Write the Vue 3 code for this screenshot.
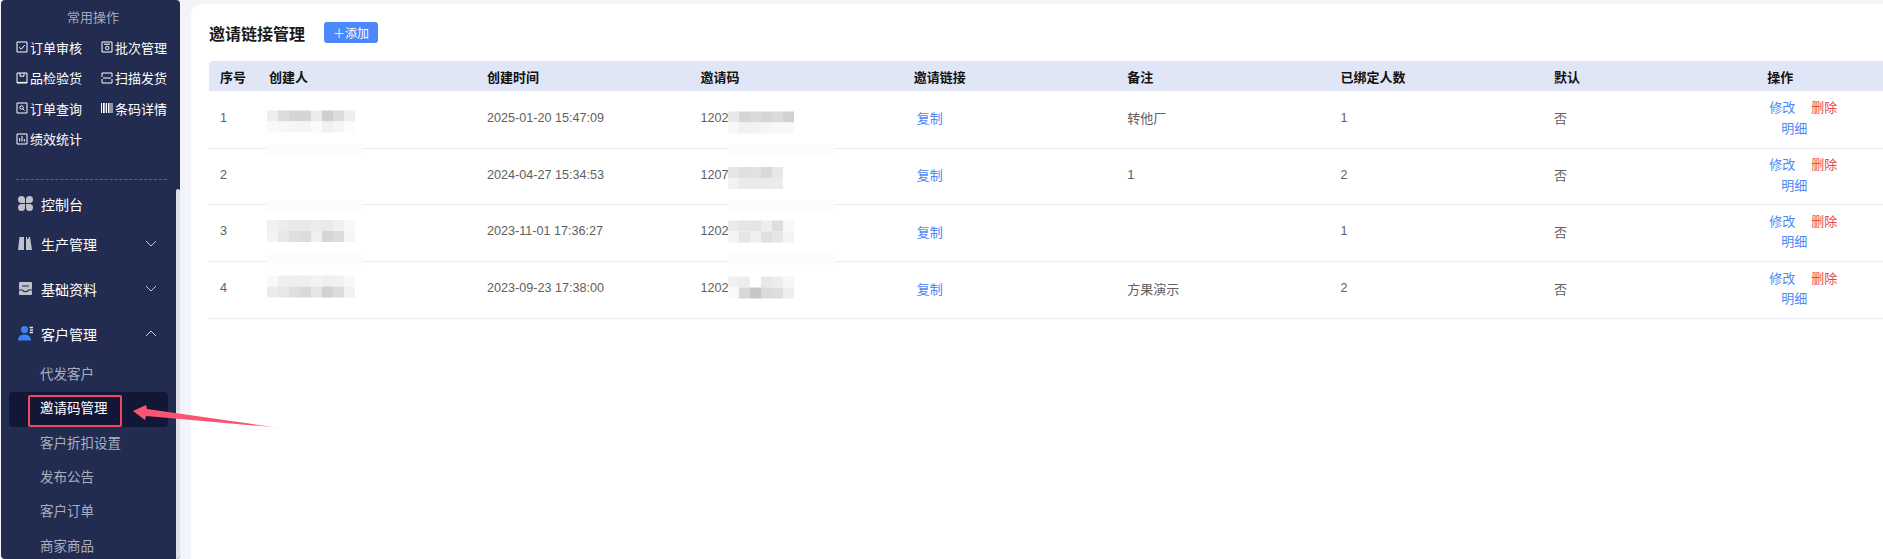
<script setup>
const quickOps = [
  { label: '订单审核', d: 'M1 1h10v10H1z M3.3 6.2l2 2 3.4-4' },
  { label: '批次管理', d: 'M1 1h10v10H1z M3 3.2h6 M8 7a1.7 1.7 0 1 1-3.4 0 1.7 1.7 0 0 1 3.4 0z' },
  { label: '品检验货', d: 'M1 1h10v10H1z M4 1v3.2h4V1 M1 10.4h10' },
  { label: '扫描发货', d: 'M1 5V1h10v4 M2 6h8 M1 7v4h10V7' },
  { label: '订单查询', d: 'M1 1h10v10H1z M7.2 5.5a1.7 1.7 0 1 1-3.4 0 1.7 1.7 0 0 1 3.4 0z M6.8 6.8l1.7 1.7' },
  { label: '条码详情', d: 'M.5 1v10 M2.5 1v10 M3.8 1v10 M5.5 1v10 M7.5 1v10 M9 1v10 M11 1v10' },
  { label: '绩效统计', d: 'M1 1h10v10H1z M3.7 5v3.5 M6 3v5.5 M8.3 6v2.5' }
]

const subMenu = ['代发客户', '邀请码管理', '客户折扣设置', '发布公告', '客户订单', '商家商品']

const headers = ['序号', '创建人', '创建时间', '邀请码', '邀请链接', '备注', '已绑定人数', '默认', '操作']

const rows = [
  {
    no: 1, time: '2025-01-20 15:47:09', prefix: '1202', note: '转他厂', bound: 1, bandTop: 54,
    creator: { y: 3.5, top: ['#eeeeee', '#dedcda', '#d4d4d4', '#d5d5d6', '#ebebeb', '#cfcfd1', '#dcdcdc', '#eeeeef'], bottom: ['#f9f9f9', '#f7f7f7', '#f6f6f6', '#f5f5f5', '#fafafa', '#f1f1f1', '#f5f5f5', '#fbfcfd'] },
    code: { y: 4.5, top: ['#e8e8e8', '#d5d5d7', '#dadada', '#d4d5d7', '#dcdbda', '#d0d1d4'], bottom: ['#f7f7f7', '#f1f1f1', '#f2f2f2', '#f5f6f5', '#f7f8f7', '#f8f8f8'] }
  },
  {
    no: 2, time: '2024-04-27 15:34:53', prefix: '1207', note: '1', bound: 2, bandTop: 51,
    creator: null,
    code: { y: 3, top: ['#e6e6e6', '#e0e0e0', '#e6e1dd', '#d8d9da', '#e8e8e8'], bottom: ['#f2f2f2', '#ebebeb', '#ebebeb', '#ebebeb', '#ececec'] }
  },
  {
    no: 3, time: '2023-11-01 17:36:27', prefix: '1202', note: '', bound: 1, bandTop: 49,
    creator: { y: 0, top: ['#f1f1f1', '#eeecea', '#e9e9e9', '#e8e8e8', '#ebebeb', '#eaeaea', '#f0f0f0', '#f8f8f8'], bottom: ['#f3f3f3', '#e7e7e7', '#dfdfdf', '#dcdcdd', '#f1efee', '#d6d6d6', '#dcdcdc', '#f4f5f7'] },
    code: { y: 0.5, top: ['#eaeaea', '#e6e6e6', '#e4e4e4', '#eeeeee', '#dddddd', '#f8f8f8'], bottom: ['#f3f3f3', '#e6e6e6', '#f0efed', '#dedfe1', '#e6e6e6', '#f4f4f4'] }
  },
  {
    no: 4, time: '2023-09-23 17:38:00', prefix: '1202', note: '方果演示', bound: 2, bandTop: null,
    creator: { y: -1.5, top: ['#f8f9f8', '#efefef', '#eeeeee', '#eeeeee', '#f3f3f3', '#efefef', '#f1f1f1', '#f7f8f9'], bottom: ['#ebebeb', '#e8e6e6', '#dfdfdf', '#d9d9da', '#e6e5e3', '#d2d2d3', '#dcdcdc', '#f1f1f3'] },
    code: { y: -0.5, top: ['#f0f0f0', '#ededed', '#ffffff', '#e8e8e8', '#ececec', '#f7f7f7'], bottom: ['#fafafa', '#d8d8d8', '#c5c6c8', '#ddd9d5', '#dcdde0', '#eeeef0'] }
  }
]
</script>

<template>
  <div class="page">
    <aside class="sidebar">
      <section class="quick">
        <div class="quick-title">常用操作</div>
        <div class="quick-grid">
          <div v-for="op in quickOps" :key="op.label" class="quick-item">
            <svg class="quick-icon" width="12" height="12" viewBox="0 0 12 12"><path :d="op.d" /></svg>
            <span>{{ op.label }}</span>
          </div>
        </div>
      </section>
      <div class="divider"></div>

      <nav class="menu">
        <div class="menu-item first">
          <svg class="menu-icon" width="15" height="15" viewBox="0 0 15 15"><path d="M3.5 0A3.5 3.5 0 0 1 7 3.5V7H3.5a3.5 3.5 0 0 1 0-7z M11.5 0A3.5 3.5 0 0 0 8 3.5V7h3.5a3.5 3.5 0 0 0 0-7z M3.5 15A3.5 3.5 0 0 0 7 11.5V8H3.5a3.5 3.5 0 0 0 0 7z M11.5 15A3.5 3.5 0 0 1 8 11.5V8h3.5a3.5 3.5 0 0 1 0 7z" /></svg>
          <span>控制台</span>
        </div>
        <div class="menu-item">
          <svg class="menu-icon" width="15" height="15" viewBox="0 0 15 15"><path d="M1.5 1H6V14H0z M8 1h1v2h1.5V1H12l2 13H8z" /></svg>
          <span>生产管理</span>
          <svg class="chev" width="12" height="7" viewBox="0 0 12 7"><path d="M1 1l5 5 5-5" /></svg>
        </div>
        <div class="menu-item">
          <svg class="menu-icon" width="15" height="15" viewBox="0 0 15 15">
            <rect x="1" y="1" width="13" height="13" rx="1" />
            <path class="tray" d="M4 5h7 M1 9h3.5c.6 2.2 5.4 2.2 6 0H14" />
          </svg>
          <span>基础资料</span>
          <svg class="chev" width="12" height="7" viewBox="0 0 12 7"><path d="M1 1l5 5 5-5" /></svg>
        </div>
        <div class="menu-item">
          <svg class="menu-icon" width="15" height="15" viewBox="0 0 15 15">
            <path class="blue" d="M6.5 0a3.6 3.6 0 1 1 0 7.2 3.6 3.6 0 0 1 0-7.2z M0 14.5c0-4 2.8-6 6.5-6s6.5 2 6.5 6z" />
            <path class="lines" d="M11.5 1.5H15 M12 4H15 M11.5 6.5H15" />
          </svg>
          <span>客户管理</span>
          <svg class="chev" width="12" height="7" viewBox="0 0 12 7"><path d="M1 6l5-5 5 5" /></svg>
        </div>
        <div
          v-for="(sub, i) in subMenu"
          :key="sub"
          class="sub-item"
          :class="{ active: i === 1 }"
        >{{ sub }}</div>
      </nav>
      <div class="scrollbar"></div>
    </aside>

    <main class="main">
      <header class="header">
        <h1 class="title">邀请链接管理</h1>
        <button class="add" type="button">＋添加</button>
      </header>

      <div class="table">
        <div class="tr head">
          <div v-for="h in headers" :key="h" class="td">{{ h }}</div>
        </div>
        <div v-for="row in rows" :key="row.no" class="tr row">
          <div class="td num">{{ row.no }}</div>
          <div class="td creator">
            <div v-if="row.creator" class="mosaic" :style="{ transform: `translateY(${row.creator.y}px)` }">
              <div class="m-row"><i v-for="(c, k) in row.creator.top" :key="k" :style="{ background: c }"></i></div>
              <div class="m-row"><i v-for="(c, k) in row.creator.bottom" :key="k" :style="{ background: c }"></i></div>
            </div>
          </div>
          <div class="td num">{{ row.time }}</div>
          <div class="td code num">
            <span>{{ row.prefix }}</span>
            <div class="mosaic" :style="{ transform: `translateY(${row.code.y}px)` }">
              <div class="m-row"><i v-for="(c, k) in row.code.top" :key="k" :style="{ background: c }"></i></div>
              <div class="m-row"><i v-for="(c, k) in row.code.bottom" :key="k" :style="{ background: c }"></i></div>
            </div>
          </div>
          <div class="td"><a class="link copy">复制</a></div>
          <div class="td">{{ row.note }}</div>
          <div class="td num">{{ row.bound }}</div>
          <div class="td">否</div>
          <div class="td ops">
            <div class="ops-line"><a class="link">修改</a><a class="danger">删除</a></div>
            <div class="ops-line second"><a class="link">明细</a></div>
          </div>
          <template v-if="row.bandTop !== null">
            <div class="band band-creator" :style="{ top: row.bandTop + 'px' }"></div>
            <div class="band band-code" :style="{ top: row.bandTop + 'px' }"></div>
          </template>
        </div>
      </div>
    </main>

    <div class="highlight"></div>
    <svg class="arrow" width="160" height="40" viewBox="0 0 160 40">
      <defs>
        <linearGradient id="tail" x1="0" x2="1" y1="0" y2="0">
          <stop offset="0" stop-color="#fb5470" />
          <stop offset="0.8" stop-color="#fb5470" />
          <stop offset="1" stop-color="#fb5470" stop-opacity="0.1" />
        </linearGradient>
      </defs>
      <path fill="url(#tail)" d="M3 16L16 10L17 14L151 33L16 21L15 25z" />
    </svg>
  </div>
</template>

<style scoped>
.page {
  position: relative;
  display: flex;
  width: 1883px;
  height: 559px;
  overflow: hidden;
  background: #f3f4f9;
  font-family: "Liberation Sans", "Noto Sans CJK SC", sans-serif;
  font-size: 13px;
}

.sidebar {
  position: relative;
  flex: none;
  width: 179px;
  margin-left: 1px;
  border-radius: 4px;
  background: #212c50;
  overflow: hidden;
}

.quick {
  padding: 8px 0 0 15px;
}
.quick-title {
  width: 154px;
  height: 20px;
  margin-bottom: 4px;
  line-height: 20px;
  text-align: center;
  color: #a3a8bb;
  font-size: 13px;
}
.quick-grid {
  display: grid;
  grid-template-columns: 85px 85px;
  grid-auto-rows: 30.5px;
}
.quick-item {
  display: flex;
  align-items: center;
  gap: 2px;
  color: #fff;
  font-size: 13px;
}
.quick-icon {
  flex: none;
  fill: none;
  stroke: #fff;
  stroke-width: 1;
}

.divider {
  width: 151px;
  margin: 25px 0 0 15px;
  border-top: 1px dashed #5b627f;
}

.menu {
  margin-top: 8px;
}
.menu-item {
  display: flex;
  align-items: center;
  box-sizing: border-box;
  height: 45px;
  padding: 0 0 4px 17px;
  color: #fff;
  font-size: 14px;
}
.menu-item.first {
  height: 35px;
}
.menu-icon {
  flex: none;
  margin-right: 8px;
  fill: #bfc2cc;
}
.tray {
  fill: none;
  stroke: #212c50;
  stroke-width: 1.2;
}
.blue {
  fill: #3b82f6;
}
.lines {
  fill: none;
  stroke: #dfe3ee;
  stroke-width: 1.3;
}
.chev {
  flex: none;
  margin-left: auto;
  margin-right: 23px;
  fill: none;
  stroke: #c5c8d4;
  stroke-width: 1;
}
.sub-item {
  display: flex;
  align-items: center;
  box-sizing: border-box;
  height: 34.3px;
  margin: 0 12px 0 8px;
  padding: 0 0 4px 31px;
  color: #a9aec0;
  font-size: 13.5px;
  border-radius: 4px;
}
.sub-item.active {
  background: #111734;
  color: #fff;
}
.scrollbar {
  position: absolute;
  top: 189px;
  right: 0;
  bottom: 0;
  width: 4px;
  border-radius: 2px 2px 0 0;
  background: #dfe1e8;
}

.main {
  flex: none;
  width: 1692px;
  margin: 4px 0 0 11px;
  padding: 18px 0 0 18px;
  box-sizing: border-box;
  border-radius: 10px 0 0 0;
  background: #fff;
  overflow: hidden;
}
.header {
  display: flex;
  align-items: center;
  height: 21px;
  margin-bottom: 18px;
}
.title {
  margin: 0 19px 0 0;
  color: #1a1a1a;
  font-size: 16px;
  font-weight: 700;
}
.add {
  width: 54px;
  height: 21px;
  padding: 0;
  border: none;
  border-radius: 3px;
  background: #4a88fb;
  color: #fff;
  font-family: inherit;
  font-size: 12px;
}

.table {
  width: 1800px;
}
.tr {
  position: relative;
  display: grid;
  grid-template-columns: 50px 218px repeat(6, 213.4px) 1fr;
  align-items: center;
}
.td {
  padding-left: 10px;
}
.td:first-child {
  padding-left: 11px;
}
.num {
  font-size: 12.6px;
}
.head {
  height: 30px;
  border-radius: 4px 0 0 0;
  background: #e1e6f6;
  color: #111;
  font-weight: 700;
}
.row {
  height: 57px;
  padding-bottom: 4px;
  box-sizing: border-box;
  border-bottom: 1px solid #eaecf4;
  color: #606060;
}
.row:nth-child(2) {
  height: 58px;
}
.row:nth-child(3) {
  height: 56px;
}

.creator {
  padding-left: 8px;
}
.code {
  display: flex;
  align-items: center;
}
.mosaic {
  flex: none;
  display: flex;
  flex-direction: column;
  width: fit-content;
}
.m-row {
  display: flex;
}
.m-row i {
  display: block;
  width: 11px;
  height: 11px;
}
.band {
  position: absolute;
  z-index: 1;
  height: 11px;
  background: #fcfcfc;
}
.band-creator {
  left: 58px;
  width: 95px;
}
.band-code {
  left: 520px;
  width: 106px;
}

.link {
  color: #4d87f7;
}
.copy {
  margin-left: 3px;
}
.danger {
  margin-left: 16px;
  color: #e8484d;
}
.ops {
  padding: 2px 0 0 12px;
  line-height: 20.5px;
}
.ops-line {
  height: 20.5px;
}
.ops-line.second {
  padding-left: 12px;
}

.highlight {
  position: absolute;
  left: 28px;
  top: 395px;
  width: 94px;
  height: 32px;
  box-sizing: border-box;
  border: 2px solid #f0485f;
  border-radius: 2px;
}
.arrow {
  position: absolute;
  left: 130px;
  top: 395px;
}
</style>
